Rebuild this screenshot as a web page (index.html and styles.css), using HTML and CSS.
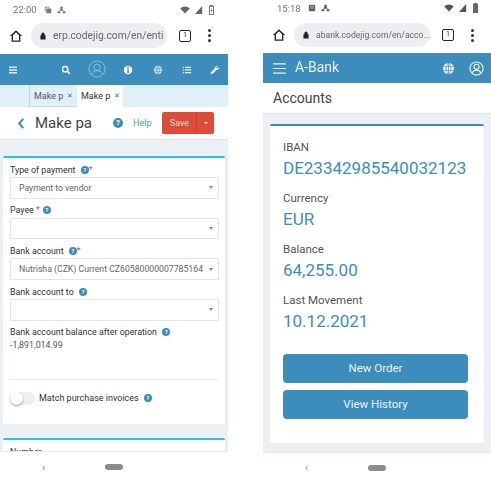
FILE: index.html
```html
<!DOCTYPE html>
<html>
<head>
    <meta charset="utf-8">
    <link rel="stylesheet" href="styles.css">
</head>
<body>
    <div class="page">
        <!-- left phone: ERP -->
        <div class="phone">
            <div class="status">
                <span class="clock">22:00</span>
                <svg class="st-icon" viewBox="0 0 10 10"><path d="M1 1h6v1H2v5H1zM3 3h6v6H3z" fill="#777"/></svg>
                <svg class="st-icon st-net" viewBox="0 0 10 10"><path d="M3.5 1h3v2.5h-3zM0 6.5h3.500v2.500H0zM6.500 6.500H10v2.500H6.500zM2 6l2-2.500h2L8 6" fill="#777"/></svg>
                <span class="grow"></span>
                <svg class="st-icon st-wifi" viewBox="0 0 12 10"><path d="M0 3a9 9 0 0 1 12 0L6 9.500z" fill="#666"/></svg>
                <svg class="st-icon" viewBox="0 0 10 10"><path d="M9 0v10H0z" fill="#666"/></svg>
                <svg class="st-icon st-batt" viewBox="0 0 8 12"><path d="M2.500 0h3v1H7v11H1V1h1.500zM2 2v9h4V2z" fill="#666"/><path d="M4.500 3 2.800 7h1.200l-.5 3 1.800-4H4z" fill="#666"/></svg>
            </div>
            <div class="chrome">
                <svg class="home" viewBox="0 0 16 16"><path d="M8 1.500 1 8h2v6.500h10V8h2zM4.500 7l3.500-3.300L11.500 7v6h-7z" fill="#222"/></svg>
                <div class="omni">
                    <svg class="lock" viewBox="0 0 8 10"><path d="M2 4V2.700a2 2 0 0 1 4 0V4h1.200v5.500H.8V4z" fill="#222"/></svg>
                    <span class="url url-erp">erp.codejig.com/en/enti</span>
                </div>
                <span class="tabcount">1</span>
                <span class="dots"><i></i><i></i><i></i></span>
            </div>
            <div class="nav nav-erp">
                <svg class="nv-icon nv-burger" viewBox="0 0 10 10"><path d="M1 1.500h8v1.500H1zM1 4.300h8v1.500H1zM1 7h8v1.500H1z" fill="#dcebf5"/></svg>
                <svg class="nv-icon nv-search" viewBox="0 0 12 12"><circle cx="5" cy="5" r="3.200" fill="none" stroke="#fff" stroke-width="1.700"/><path d="m7.500 7.500 3.200 3.200" stroke="#fff" stroke-width="2"/></svg>
                <svg class="nv-user" viewBox="0 0 20 20"><circle cx="10" cy="10" r="9" fill="none" stroke="#a9cde3" stroke-width=".8"/><circle cx="10" cy="8" r="3.500" fill="none" stroke="#a9cde3" stroke-width=".8"/><path d="M4 16c1-3 3-4 6-4s5 1 6 4" fill="none" stroke="#a9cde3" stroke-width=".8"/></svg>
                <svg class="nv-icon nv-info" viewBox="0 0 12 12"><circle cx="6" cy="6" r="5" fill="#fff"/><path d="M5 2.500h2v1.600H5zM4.700 5h2.300v3.200h.6v1H4.700v-1h.6V6h-.6z" fill="#3d8dbc"/></svg>
                <svg class="nv-icon nv-globe" viewBox="0 0 12 12"><circle cx="6" cy="6" r="5" fill="#d5e6f1"/><path d="M1 4.300h10M1 7.700h10M6 1v10M6 1c-3 3-3 7 0 10M6 1c3 3 3 7 0 10" fill="none" stroke="#3d8dbc" stroke-width=".6"/></svg>
                <svg class="nv-icon nv-list" viewBox="0 0 12 12"><path d="M1 2h1.500v1.500H1zM3.500 2H11v1.500H3.500zM1 5.200h1.500v1.500H1zM3.500 5.200H11v1.500H3.500zM1 8.400h1.500v1.500H1zM3.500 8.400H11v1.500H3.500z" fill="#e6f0f7"/></svg>
                <svg class="nv-icon nv-wrench" viewBox="0 0 12 12"><path d="M11 2.500 9 4.300 7.800 4l-.3-1.300L9.300 1C7.500.5 5.800 1.800 6 3.800L1 9c-.8 1.100.6 2.600 1.800 1.800l5-5c2 .4 3.600-1.300 3.200-3.300z" fill="#fff"/></svg>
            </div>
            <div class="tabs">
                <div class="tab"><span class="tab-text">Make p</span><b class="x">✕</b></div>
                <div class="tab tab-on"><span class="tab-text">Make p</span><b class="x">✕</b></div>
            </div>
            <div class="titlebar">
                <svg class="back" viewBox="0 0 8 12"><path d="M6.500 1 2 6l4.500 5" fill="none" stroke="#3c8dbc" stroke-width="2.200"/></svg>
                <span class="title">Make pa</span>
                <span class="hint hint-lg">?</span>
                <span class="help">Help</span>
                <div class="savebtn"><span class="save">Save</span><span class="caret-box"><i class="caret"></i></span></div>
            </div>
            <div class="content content-erp">
                <div class="card">
                    <div class="label">Type of payment <span class="hint">?</span><em>*</em></div>
                    <div class="select"><span class="val">Payment to vendor</span><i class="arrow"></i></div>
                    <div class="label">Payee <em>*</em> <span class="hint">?</span></div>
                    <div class="select"><span class="val"></span><i class="arrow"></i></div>
                    <div class="label">Bank account <span class="hint">?</span><em>*</em></div>
                    <div class="select"><span class="val">Nutrisha (CZK) Current CZ60580000007785164</span><i class="arrow"></i></div>
                    <div class="label">Bank account to <span class="hint">?</span></div>
                    <div class="select"><span class="val"></span><i class="arrow"></i></div>
                    <div class="label">Bank account balance after operation <span class="hint">?</span></div>
                    <div class="amount">-1,891,014.99</div>
                    <div class="rule"></div>
                    <div class="match">
                        <span class="toggle"><i class="knob"></i></span>
                        <span class="match-text">Match purchase invoices</span>
                        <span class="hint">?</span>
                    </div>
                </div>
                <div class="card card-next">
                    <div class="label">Number</div>
                </div>
            </div>
            <div class="sysnav"><span class="sysback">‹</span><span class="pill"></span></div>
        </div>

        <!-- right phone: A-Bank -->
        <div class="phone">
            <div class="status status-r">
                <span class="clock">15:18</span>
                <svg class="st-icon" viewBox="0 0 10 10"><path d="M1 1h8v8H1z" fill="#666"/><path d="M2.500 3h5M2.500 5h5" stroke="#ccc" stroke-width=".7"/></svg>
                <svg class="st-icon st-net" viewBox="0 0 10 10"><path d="M3.5 1h3v2.5h-3zM0 6.5h3.500v2.500H0zM6.500 6.500H10v2.500H6.500zM2 6l2-2.500h2L8 6" fill="#555"/></svg>
                <span class="grow"></span>
                <svg class="st-icon st-wifi" viewBox="0 0 12 10"><path d="M0 3a9 9 0 0 1 12 0L6 9.500z" fill="#555"/></svg>
                <svg class="st-icon" viewBox="0 0 10 10"><path d="M9 0v10H0z" fill="#555"/></svg>
                <svg class="st-icon st-batt" viewBox="0 0 8 12"><path d="M2.500 0h3v1H7v11H1V1h1.500z" fill="#666"/></svg>
            </div>
            <div class="chrome chrome-r">
                <svg class="home" viewBox="0 0 16 16"><path d="M8 1.500 1 8h2v6.500h10V8h2zM4.500 7l3.500-3.300L11.500 7v6h-7z" fill="#222"/></svg>
                <div class="omni">
                    <svg class="lock" viewBox="0 0 8 10"><path d="M2 4V2.700a2 2 0 0 1 4 0V4h1.200v5.500H.8V4z" fill="#222"/></svg>
                    <span class="url url-bank">abank.codejig.com/en/acco...</span>
                </div>
                <span class="tabcount">1</span>
                <span class="dots"><i></i><i></i><i></i></span>
            </div>
            <div class="nav nav-bank">
                <svg class="bank-burger" viewBox="0 0 14 12"><path d="M0 1h14M0 6h14M0 11h14" stroke="#e8f1f7" stroke-width="1.300"/></svg>
                <span class="brand">A-Bank</span>
                <span class="grow"></span>
                <svg class="bank-globe" viewBox="0 0 14 14"><circle cx="7" cy="7" r="6" fill="#eef5fa"/><path d="M1 5h12M1 9h12M7 1v12M7 1c-3.500 3.500-3.500 8.500 0 12M7 1c3.500 3.500 3.500 8.500 0 12" fill="none" stroke="#3d8dbc" stroke-width=".7"/></svg>
                <svg class="bank-user" viewBox="0 0 16 16"><circle cx="8" cy="8" r="7" fill="none" stroke="#eef5fa" stroke-width="1.200"/><circle cx="8" cy="6.200" r="2.700" fill="none" stroke="#eef5fa" stroke-width="1.200"/><path d="M3.500 12.500c1-2 2.500-2.800 4.500-2.800s3.500.8 4.500 2.800" fill="none" stroke="#eef5fa" stroke-width="1.200"/></svg>
            </div>
            <div class="pagehead">Accounts</div>
            <div class="content content-bank">
                <div class="bank-card">
                    <div class="b-label">IBAN</div>
                    <div class="b-value">DE23342985540032123</div>
                    <div class="b-label">Currency</div>
                    <div class="b-value">EUR</div>
                    <div class="b-label">Balance</div>
                    <div class="b-value">64,255.00</div>
                    <div class="b-label">Last Movement</div>
                    <div class="b-value">10.12.2021</div>
                    <div class="b-btn b-btn-first">New Order</div>
                    <div class="b-btn">View History</div>
                </div>
            </div>
            <div class="sysnav sysnav-r"><span class="sysback">‹</span><span class="pill"></span></div>
        </div>
    </div>
</body>
</html>
```

FILE: styles.css
```css
* {
    margin: 0;
    padding: 0;
    box-sizing: border-box;
}

body {
    width: 491px;
    height: 482px;
    overflow: hidden;
    background: white;
    font-family: Roboto, sans-serif;
    color: #444;
}

.page {
    display: flex;
    justify-content: space-between;
    height: 482px;
    filter: blur(0.35px);
}

.phone {
    width: 228px;
    height: 482px;
    display: flex;
    flex-direction: column;
    overflow: hidden;
}

.grow {
    flex: 1;
}

/* status bar */
.status {
    height: 22px;
    flex: none;
    display: flex;
    align-items: center;
    gap: 5px;
    padding: 0 13px 3px 13px;
}

.status-r {
    padding: 0 12px 6px 14px;
}

.clock {
    font-size: 9.500px;
    color: #777;
    margin-right: 2px;
}

.st-icon {
    width: 8px;
    height: 8px;
}

.st-net {
    width: 9px;
}

.st-wifi {
    width: 10px;
}

.st-batt {
    width: 7px;
    height: 10px;
}

/* browser toolbar */
.chrome {
    height: 32px;
    flex: none;
    display: flex;
    align-items: center;
    padding: 0 0 5px 9px;
}

.chrome-r {
    height: 31px;
}

.home {
    width: 14px;
    height: 14px;
    flex: none;
}

.omni {
    width: 136px;
    height: 25px;
    margin-left: 8px;
    border-radius: 13px;
    background: #eceef1;
    display: flex;
    align-items: center;
    padding-left: 8px;
    overflow: hidden;
    flex: none;
}

.chrome-r .omni {
    height: 24px;
}

.lock {
    width: 8px;
    height: 8px;
    flex: none;
}

.url {
    color: #666;
    white-space: nowrap;
}

.url-erp {
    font-size: 10.300px;
    margin-left: 6px;
}

.url-bank {
    font-size: 8.600px;
    margin-left: 6px;
}

.tabcount {
    width: 12px;
    height: 12px;
    margin-left: 12px;
    border: 1.500px solid #222;
    border-radius: 2px;
    font-size: 7px;
    line-height: 9px;
    text-align: center;
    color: #222;
    flex: none;
}

.dots {
    margin-left: 17px;
    display: flex;
    flex-direction: column;
    gap: 2px;
}

.dots i {
    width: 3px;
    height: 3px;
    border-radius: 50%;
    background: #333;
}

/* top nav */
.nav {
    flex: none;
    display: flex;
    align-items: center;
    background: #3d8dbc;
}

.nav-erp {
    height: 31px;
}

.nv-icon {
    width: 10px;
    height: 10px;
    flex: none;
}

.nv-burger {
    margin-left: 8px;
}

.nv-search {
    margin-left: 43px;
}

.nv-user {
    width: 18px;
    height: 18px;
    margin-left: 17px;
    margin-bottom: 1px;
    flex: none;
}

.nv-info {
    margin-left: 17px;
}

.nv-globe {
    margin-left: 20px;
}

.nv-list {
    margin-left: 19px;
}

.nv-wrench {
    margin-left: 18px;
}

.nav-bank {
    height: 30px;
    padding: 0 7px 0 10px;
}

.bank-burger {
    width: 13px;
    height: 11px;
}

.brand {
    font-size: 14px;
    color: #eaf3f8;
    margin-left: 9px;
    margin-bottom: 2px;
}

.bank-globe {
    width: 13px;
    height: 13px;
}

.bank-user {
    width: 15px;
    height: 15px;
    margin-left: 14px;
}

/* tabs */
.tabs {
    height: 22px;
    flex: none;
    display: flex;
    padding-left: 29px;
    background: #e0f0f9;
}

.tab {
    width: 48px;
    display: flex;
    align-items: center;
    font-size: 9px;
    padding-left: 4px;
    color: #555;
    white-space: nowrap;
    border-left: 1px solid #c6d8e2;
    border-bottom: 1px solid #c6d8e2;
}

.tab-on {
    width: 46px;
    background: white;
    border-left: none;
    border-bottom: none;
    color: #333;
}

.tab-text {
    width: 33px;
}

.x {
    font-weight: normal;
    font-size: 7px;
    color: #666;
}

/* title row */
.titlebar {
    height: 33px;
    flex: none;
    display: flex;
    align-items: center;
    background: white;
    padding-left: 17px;
    border-bottom: 1px solid #e2e5e8;
}

.back {
    width: 8px;
    height: 11px;
    flex: none;
}

.title {
    font-size: 15px;
    margin-left: 10px;
    width: 78px;
    color: #444;
}

.help {
    font-size: 9px;
    color: #4b93c0;
    margin-left: 10px;
}

.savebtn {
    display: flex;
    height: 22px;
    margin-left: 11px;
    background: #dd4b39;
    border-radius: 2px;
    color: #f9dcd8;
    font-size: 9px;
}

.save {
    width: 35px;
    line-height: 22px;
    text-align: center;
    border-right: 1px solid #c63f2f;
}

.caret-box {
    width: 17px;
    display: flex;
    align-items: center;
    justify-content: center;
}

.caret {
    border-top: 2px solid white;
    border-left: 2px solid transparent;
    border-right: 2px solid transparent;
}

/* grey content area */
.content {
    flex: 1;
    overflow: hidden;
    background: #ecf0f5;
}

.content-erp {
    padding: 16px 3px 0;
}

.card {
    height: 268px;
    background: white;
    border-top: 2px solid #26c0ef;
    border-radius: 2px;
    padding: 6px 6px 0 7px;
}

.card-next {
    margin-top: 14px;
    height: 40px;
}

.label {
    display: flex;
    align-items: center;
    height: 11px;
    font-size: 8.850px;
    color: #333;
    white-space: pre;
}

.label em {
    color: #dd4b39;
    font-style: normal;
}

.hint {
    width: 8px;
    height: 8px;
    border-radius: 50%;
    background: #3d8dbc;
    color: white;
    font-size: 6px;
    font-weight: bold;
    line-height: 8px;
    text-align: center;
    flex: none;
}

.label .hint {
    margin-left: 3px;
}

.hint-lg {
    width: 10px;
    height: 10px;
    font-size: 8px;
    line-height: 10px;
}

.select {
    height: 21.700px;
    margin: 2px 0 6px;
    border: 1px solid #e4e6e8;
    display: flex;
    align-items: center;
    padding: 0 5px 0 8px;
}

.val {
    flex: 1;
    font-size: 8.700px;
    color: #666;
    white-space: nowrap;
    overflow: hidden;
}

.arrow {
    margin-left: 2px;
    border-top: 3px solid #888;
    border-left: 2px solid transparent;
    border-right: 2px solid transparent;
}

.amount {
    font-size: 8.800px;
    color: #555;
    margin-top: 2px;
    height: 10px;
}

.rule {
    height: 1px;
    background: #e8e8e8;
    margin-top: 29px;
}

.match {
    display: flex;
    align-items: center;
    margin-top: 12px;
}

.toggle {
    position: relative;
    width: 25px;
    height: 13px;
    border-radius: 7px;
    background: #eeeeee;
    flex: none;
}

.knob {
    position: absolute;
    left: 0;
    top: 0;
    width: 13px;
    height: 13px;
    border-radius: 50%;
    background: white;
    box-shadow: 0 1px 2px rgba(0, 0, 0, 0.4);
}

.match-text {
    font-size: 9px;
    color: #333;
    margin: 0 5px 0 4px;
}

/* system nav */
.sysnav {
    height: 31px;
    flex: none;
    display: flex;
    align-items: center;
    background: white;
    padding-left: 42px;
    border-top: 1px solid #e6e8ea;
}

.sysnav-r {
    height: 30px;
}

.sysback {
    font-size: 11px;
    color: #888;
    width: 63px;
    line-height: 11px;
}

.pill {
    width: 18px;
    height: 6px;
    border-radius: 3px;
    background: #8c8c8c;
}

/* A-Bank */
.pagehead {
    height: 31px;
    flex: none;
    font-size: 14px;
    line-height: 30px;
    padding-left: 10px;
    color: #444;
    background: white;
    border-bottom: 1px solid #e2e5e8;
}

.content-bank {
    padding: 10px 7px 9px;
}

.bank-card {
    height: 100%;
    background: white;
    border-top: 2px solid #3d8dbc;
    border-radius: 2px;
    padding: 14px 16px 0 13px;
}

.b-label {
    font-size: 11.500px;
    color: #555;
    line-height: 15px;
}

.b-value {
    font-size: 17px;
    color: #3d8dbc;
    line-height: 22px;
    margin: 2px 0 12px;
    white-space: nowrap;
}

.b-btn {
    height: 29px;
    margin-top: 7px;
    background: #3d8dbc;
    border-radius: 4px;
    color: #eaf3f8;
    font-size: 11.500px;
    line-height: 29px;
    text-align: center;
}

.b-btn-first {
    margin-top: 22px;
}
```
